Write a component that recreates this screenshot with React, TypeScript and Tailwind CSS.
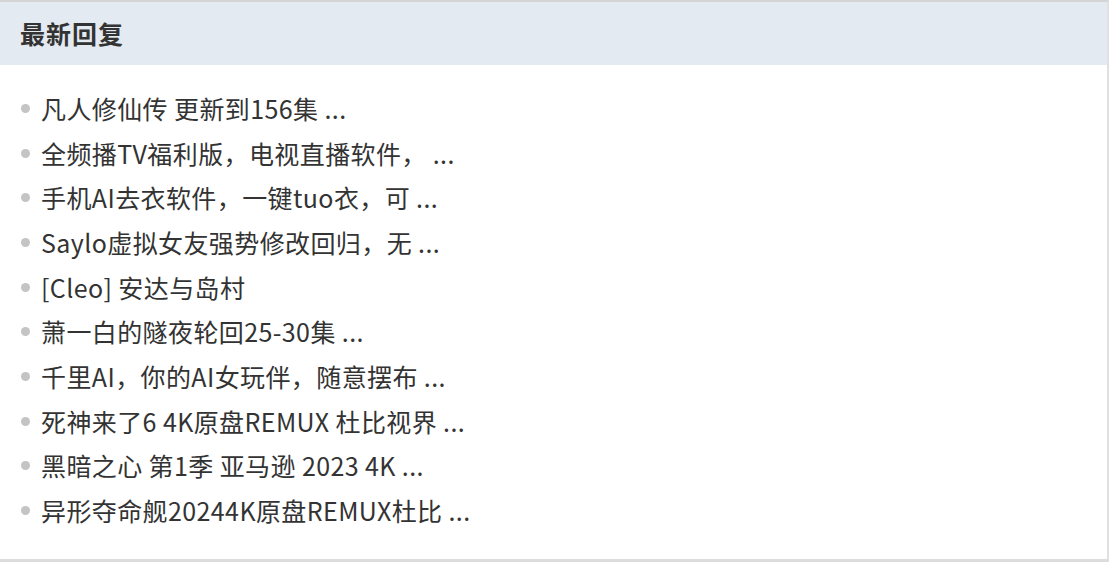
import React from "react"

const items = [
  "凡人修仙传 更新到156集 ...",
  "全频播TV福利版，电视直播软件， ...",
  "手机AI去衣软件，一键tuo衣，可 ...",
  "Saylo虚拟女友强势修改回归，无 ...",
  "[Cleo] 安达与岛村",
  "萧一白的隧夜轮回25-30集 ...",
  "千里AI，你的AI女玩伴，随意摆布 ...",
  "死神来了6 4K原盘REMUX 杜比视界 ...",
  "黑暗之心 第1季 亚马逊 2023 4K ...",
  "异形夺命舰20244K原盘REMUX杜比 ...",
]

export default function App() {
  return (
    <div
      className="w-[1109px] h-[578px] bg-white"
      style={{ fontFamily: "Tahoma, 'Noto Sans CJK SC', sans-serif" }}
    >
      <div className="border-t-2 border-b-[3px] border-r-2 border-t-[#d4d4d4] border-b-[#dcdcdc] border-r-[#e0e0e0]">
        {/* Header */}
        <div className="h-[63px] bg-[#e4eaf1] flex items-center pl-5">
          <h3 className="text-[25px] font-bold text-[#333] leading-none tracking-[1px]">最新回复</h3>
        </div>

        {/* List */}
        <ul className="pt-[21px] pb-[26px]">
          {items.map((t) => (
            <li key={t} className="h-[44.7px] flex items-center pl-[21px] text-[25px] text-[#333]">
              <span className="w-[9px] h-[9px] rounded-full bg-[#c4c4c4] mr-[11px] shrink-0" />
              <a href="#" className="leading-none whitespace-nowrap tracking-[0.4px]">{t}</a>
            </li>
          ))}
        </ul>
      </div>
    </div>
  )
}
